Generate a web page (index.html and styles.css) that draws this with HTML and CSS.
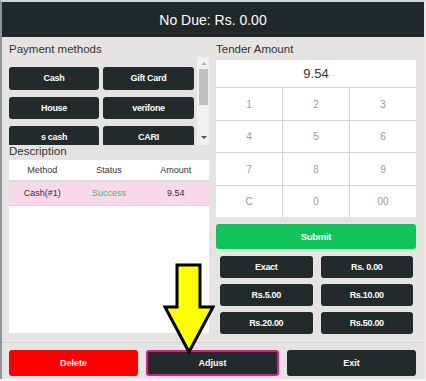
FILE: index.html
```html
<!DOCTYPE html>
<html lang="en">
<head>
    <meta charset="UTF-8">
    <meta name="viewport" content="width=device-width, initial-scale=1.0">
    <title>Tender</title>
    <link rel="stylesheet" href="styles.css">
</head>
<body>
    <div class="frame">
        <header class="topbar">No Due: Rs. 0.00</header>

        <div class="main">
            <div class="col-left">
                <p class="label">Payment methods</p>
                <div class="methods">
                    <div class="method-grid">
                        <button class="btn-dark">Cash</button>
                        <button class="btn-dark">Gift Card</button>
                        <button class="btn-dark">House</button>
                        <button class="btn-dark">verifone</button>
                        <button class="btn-dark">s cash</button>
                        <button class="btn-dark">CARI</button>
                    </div>
                    <div class="scrollbar">
                        <span class="arrow-up"></span>
                        <span class="thumb"></span>
                        <span class="arrow-down"></span>
                    </div>
                </div>
                <p class="label label-desc">Description</p>
                <div class="desc-table">
                    <div class="row row-head">
                        <span>Method</span>
                        <span>Status</span>
                        <span>Amount</span>
                    </div>
                    <div class="row row-pay">
                        <span>Cash(#1)</span>
                        <span class="ok">Success</span>
                        <span>9.54</span>
                    </div>
                </div>
            </div>

            <div class="col-right">
                <p class="label">Tender Amount</p>
                <div class="keypad">
                    <div class="display">9.54</div>
                    <div class="key">1</div>
                    <div class="key">2</div>
                    <div class="key">3</div>
                    <div class="key">4</div>
                    <div class="key">5</div>
                    <div class="key">6</div>
                    <div class="key">7</div>
                    <div class="key">8</div>
                    <div class="key">9</div>
                    <div class="key">C</div>
                    <div class="key">0</div>
                    <div class="key">00</div>
                </div>
                <button class="btn-submit">Submit</button>
                <div class="quick">
                    <button class="btn-dark">Exact</button>
                    <button class="btn-dark">Rs. 0.00</button>
                    <button class="btn-dark">Rs.5.00</button>
                    <button class="btn-dark">Rs.10.00</button>
                    <button class="btn-dark">Rs.20.00</button>
                    <button class="btn-dark">Rs.50.00</button>
                </div>
            </div>
        </div>

        <div class="footer">
            <button class="btn-big btn-delete">Delete</button>
            <button class="btn-big btn-adjust">Adjust</button>
            <button class="btn-big">Exit</button>
        </div>

        <!-- pointer drawn over the screen -->
        <svg class="pointer" width="52" height="92" viewBox="0 0 52 92">
            <path d="M14 2 H37 V44 H50 L26 89 L2 44 H14 Z" fill="#ffff00" stroke="#000" stroke-width="3" stroke-linejoin="miter"/>
        </svg>
    </div>
</body>
</html>
```

FILE: styles.css
```css
body {
    margin: 0;
    padding: 0;
    background: #f2f2f2;
    font-family: "Liberation Sans", Arial, sans-serif;
}

.frame {
    position: relative;
    height: 379px;
    box-sizing: border-box;
    background-color: #e5e4e2;
    border-top: 2px solid #cdd4da;
    border-left: 2px solid #8e949a;
    border-right: 2px solid #e9e9e9;
}

.topbar {
    height: 35px;
    background-color: #212829;
    color: #fff;
    font-size: 14px;
    display: flex;
    align-items: center;
    justify-content: center;
}

.main {
    height: 305px;
    display: flex;
    gap: 7px;
    padding: 0 8px 0 7px;
}

.col-left,
.col-right {
    width: 200px;
}

.col-right {
    display: flex;
    flex-direction: column;
}

.label {
    margin: 0;
    padding-top: 4px;
    height: 16px;
    line-height: 16px;
    font-size: 11.5px;
    color: #333;
}

.label-desc {
    padding-top: 0;
    height: 15px;
    line-height: 13px;
}

button {
    font-family: "Liberation Sans", Arial, sans-serif;
    border: none;
    cursor: pointer;
    padding: 0;
}

.btn-dark {
    background-color: #222a2b;
    color: #fff;
    font-weight: bold;
    font-size: 9px;
    letter-spacing: -0.3px;
    border-radius: 3px;
}

/* payment methods */
.methods {
    height: 88px;
    display: flex;
    overflow: hidden;
}

.method-grid {
    flex: 1;
    display: grid;
    grid-template-columns: 90px 91px;
    grid-auto-rows: 22.5px;
    column-gap: 4px;
    row-gap: 7px;
    padding-top: 10px;
    overflow: hidden;
}

.scrollbar {
    width: 12px;
    margin-left: 3px;
    background-color: #f1f1f1;
    position: relative;
}

.thumb {
    position: absolute;
    left: 2px;
    right: 1px;
    top: 12px;
    height: 36px;
    background-color: #c1c1c1;
}

.arrow-up,
.arrow-down {
    position: absolute;
    left: 4px;
    width: 0;
    height: 0;
    border-left: 3px solid transparent;
    border-right: 3px solid transparent;
}

.arrow-up {
    top: 5px;
    border-bottom: 3px solid #b8b8b8;
}

.arrow-down {
    bottom: 6px;
    border-top: 3px solid #505050;
}

/* description table */
.desc-table {
    height: 173px;
    background-color: #fff;
}

.row {
    display: grid;
    grid-template-columns: 1fr 1fr 1fr;
    text-align: center;
    font-size: 9px;
    color: #333;
}

.row-head {
    height: 20px;
    line-height: 20px;
    border-bottom: 2px solid #dcdcdc;
}

.row-pay {
    height: 23px;
    line-height: 23px;
    background-color: #f8d8ea;
    border-bottom: 1px solid #dcd6da;
}

.ok {
    color: #35c36a;
}

/* tender keypad */
.keypad {
    margin-top: 3px;
    display: grid;
    grid-template-columns: 66px 66px 66px;
    grid-template-rows: 27px 32px 31px 32px 31px;
    gap: 1px;
    background-color: #d2d2d2;
    transform: translateZ(0);
}

.display {
    grid-column: 1 / 4;
    background-color: #fff;
    font-size: 13px;
    color: #333;
    display: flex;
    align-items: center;
    justify-content: center;
}

.key {
    background-color: #fff;
    font-size: 10px;
    color: #999;
    display: flex;
    align-items: center;
    justify-content: center;
}

.btn-submit {
    margin-top: 7px;
    height: 25px;
    background-color: #12c25a;
    color: #fff;
    font-weight: bold;
    font-size: 9.5px;
    letter-spacing: -0.3px;
    border-radius: 3px;
}

.quick {
    margin-top: 7px;
    padding: 0 3px 0 4px;
    display: grid;
    grid-template-columns: 1fr 1fr;
    grid-auto-rows: 21.5px;
    column-gap: 8px;
    row-gap: 6.5px;
}

/* footer buttons */
.footer {
    border-top: 1px solid #d6d5d3;
    padding: 7px 8px 0 7px;
    display: flex;
    gap: 8px;
}

.btn-big {
    flex: 1;
    height: 26px;
    background-color: #222a2b;
    color: #fff;
    font-weight: bold;
    font-size: 9px;
    border-radius: 3px;
    box-sizing: border-box;
}

.btn-delete {
    background-color: #ff0000;
}

.btn-adjust {
    border: 2px solid #e5198e;
}

.pointer {
    position: absolute;
    left: 161px;
    top: 261px;
}
```
